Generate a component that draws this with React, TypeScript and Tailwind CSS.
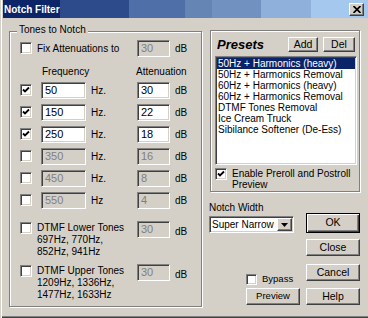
import React from "react";

const FONT = { fontFamily: '"Liberation Sans", Arial, sans-serif' };

const sunken =
  "border border-t-[#808080] border-l-[#808080] border-r-white border-b-white shadow-[inset_1px_1px_0_#404040,inset_-1px_-1px_0_#d4d0c8]";
const raised =
  "border border-t-white border-l-white border-r-[#404040] border-b-[#404040] shadow-[inset_-1px_-1px_0_#808080]";

function Check({ checked = false, size = 12 }: { checked?: boolean; size?: number }) {
  return (
    <div
      className={`${sunken} bg-white shrink-0 flex items-center justify-center`}
      style={{ width: size, height: size }}
    >
      {checked && (
        <svg width="8" height="8" viewBox="0 0 8 8">
          <path d="M1 3.5 L3 5.5 L7 1.5" stroke="#000" strokeWidth="1.8" fill="none" />
        </svg>
      )}
    </div>
  );
}

function Field({ value, w, disabled = false }: { value: string; w: number; disabled?: boolean }) {
  return (
    <div
      className={`${sunken} h-[17px] shrink-0 flex items-center pl-[3px] text-[11px] leading-none ${
        disabled ? "bg-[#d4d0c8] text-[#808080]" : "bg-white text-black"
      }`}
      style={{ width: w }}
    >
      {value}
    </div>
  );
}

function Btn({ label, w, def = false, small = false }: { label: string; w: number; def?: boolean; small?: boolean }) {
  if (def) {
    return (
      <div
        className="border border-black h-[20px] flex items-center justify-center bg-[#d4d0c8] shadow-[inset_1px_1px_0_#fff,inset_-1px_-1px_0_#404040,inset_-2px_-2px_0_#808080] text-[10.5px] text-black"
        style={{ width: w }}
      >
        {label}
      </div>
    );
  }
  return (
    <div
      className={`${raised} h-[17px] flex items-center justify-center bg-[#d4d0c8] text-black ${
        small ? "text-[9.5px]" : "text-[10.5px]"
      }`}
      style={{ width: w }}
    >
      {label}
    </div>
  );
}

const rows = [
  { f: "50", a: "30", on: true, u: "Hz." },
  { f: "150", a: "22", on: true, u: "Hz." },
  { f: "250", a: "18", on: true, u: "Hz." },
  { f: "350", a: "16", on: false, u: "Hz." },
  { f: "450", a: "8", on: false, u: "Hz." },
  { f: "550", a: "4", on: false, u: "Hz" },
];

const presets = [
  "50Hz + Harmonics (heavy)",
  "50Hz + Harmonics Removal",
  "60Hz + Harmonics (heavy)",
  "60Hz + Harmonics Removal",
  "DTMF Tones Removal",
  "Ice Cream Truck",
  "Sibilance Softener (De-Ess)",
];

export default function App() {
  return (
    <div
      className="w-[368px] h-[318px] bg-[#d4d0c8] overflow-hidden flex flex-col pl-[3px] shadow-[inset_1px_0_0_#d4d0c8,inset_2px_0_0_#fff,inset_0_-1px_0_#404040,inset_0_-2px_0_#808080] text-black select-none"
      style={FONT}
    >
      {/* Title bar */}
      <div className="h-[18px] flex items-center justify-between bg-[linear-gradient(90deg,#0c2468_0px_57px,#2d4a8a_57px_126px,#4f6fa8_126px_182px,#6585b4_182px_209px,#7191c1_209px_258px,#8eb0da_258px_308px,#a4c8ee_308px)]">
        <span className="text-white font-bold text-[10px] leading-none pl-[1px] pt-[1px]">Notch Filter</span>
        <div className={`${raised} w-[15px] h-[13px] mr-[4px] bg-[#d4d0c8] flex items-center justify-center`}>
          <svg width="8" height="7" viewBox="0 0 8 7">
            <path d="M0.5 0 L7.5 7 M7.5 0 L0.5 7" stroke="#000" strokeWidth="1.7" />
          </svg>
        </div>
      </div>

      <div className="flex items-start pl-[6px]">
        {/* Left group */}
        <div className="relative mt-[13px] w-[193px] h-[276px] border border-[#808080] shadow-[inset_1px_1px_0_#fff,1px_1px_0_#fff] flex flex-col pl-[10px] text-[10px]">
          <span className="absolute left-[7px] top-[-8px] px-[2px] bg-[#d4d0c8] leading-[11px]">Tones to Notch</span>

          <div className="mt-[5px] h-[22px] flex items-center">
            <Check />
            <span className="w-[105px] pl-[5px] leading-[11px]">Fix Attenuations to</span>
            <Field value="30" w={33} disabled />
            <span className="ml-[5px]">dB</span>
          </div>

          <div className="h-[20px] pt-[7px] flex leading-[11px] pl-[22px]">
            <span className="w-[94px]">Frequency</span>
            <span>Attenuation</span>
          </div>

          {rows.map((r) => (
            <div key={r.f} className="h-[22px] flex items-center">
              <Check checked={r.on} />
              <div className="w-[9px]" />
              <Field value={r.f} w={45} disabled={!r.on} />
              <span className="w-[51px] pl-[5px]">{r.u}</span>
              <Field value={r.a} w={33} disabled={!r.on} />
              <span className="ml-[5px]">dB</span>
            </div>
          ))}

          <div className="mt-[10px] flex items-start">
            <div className="mt-[1px]">
              <Check />
            </div>
            <div className="w-[105px] pl-[5px] leading-[12px] pt-[1px]">
              <div>DTMF Lower Tones</div>
              <div>697Hz, 770Hz,</div>
              <div>852Hz, 941Hz</div>
            </div>
            <Field value="30" w={33} disabled />
            <span className="ml-[5px] mt-[3px]">dB</span>
          </div>

          <div className="mt-[6px] flex items-start">
            <div className="mt-[1px]">
              <Check />
            </div>
            <div className="w-[105px] pl-[5px] leading-[12px] pt-[1px]">
              <div>DTMF Upper Tones</div>
              <div>1209Hz, 1336Hz,</div>
              <div>1477Hz, 1633Hz</div>
            </div>
            <Field value="30" w={33} disabled />
            <span className="ml-[5px] mt-[3px]">dB</span>
          </div>
        </div>

        {/* Right column */}
        <div className="ml-[7px] w-[152px] flex flex-col text-[10px]">
          <div className="ml-[1px] mt-[12px] w-[150px] h-[162px] border border-[#808080] shadow-[inset_1px_1px_0_#fff,1px_1px_0_#fff] flex flex-col pt-[6px]">
            <div className="h-[15px] flex items-center">
              <span className="ml-[6px] w-[71px] font-bold italic text-[13px] leading-none">Presets</span>
              <div className={`${raised} w-[30px] h-[15px] flex items-center justify-center text-[10.5px]`}>Add</div>
              <div className={`${raised} ml-[5px] w-[32px] h-[15px] flex items-center justify-center text-[10.5px]`}>Del</div>
            </div>
            <div className={`${sunken} ml-[4px] mt-[4px] w-[142px] h-[109px] bg-white pt-[1px] px-[1px]`}>
              {presets.map((p, i) => (
                <div
                  key={p}
                  className={`h-[11px] leading-[11px] pl-[1px] whitespace-nowrap ${
                    i === 0 ? "bg-[#0a246a] text-white" : "text-black"
                  }`}
                >
                  {p}
                </div>
              ))}
            </div>
            <div className="ml-[4px] mt-[3px] flex items-start">
              <Check checked />
              <div className="pl-[5px] leading-[11px]">
                <div>Enable Preroll and Postroll</div>
                <div>Preview</div>
              </div>
            </div>
          </div>

          <div className="flex">
            <div className="w-[97px] flex flex-col">
              <span className="mt-[10px] leading-[11px]">Notch Width</span>
              <div className={`${sunken} mt-[3px] w-[85px] h-[17px] bg-white flex items-center justify-between pl-[2px] pr-[1px]`}>
                <span className="leading-none">Super Narrow</span>
                <div className={`${raised} w-[15px] h-[13px] bg-[#d4d0c8] flex items-center justify-center`}>
                  <svg width="7" height="4" viewBox="0 0 7 4">
                    <path d="M0 0 H7 L3.5 4 Z" fill="#000" />
                  </svg>
                </div>
              </div>
              <div className="mt-[40px] ml-[37px] h-[12px] flex items-center">
                <Check size={11} />
                <span className="ml-[5px] text-[9.5px]">Bypass</span>
              </div>
              <div className="mt-[3px] ml-[37px]">
                <Btn label="Preview" w={54} small />
              </div>
            </div>
            <div className="flex flex-col mt-[21px]">
              <Btn label="OK" w={54} def />
              <div className="mt-[6px]">
                <Btn label="Close" w={54} />
              </div>
              <div className="mt-[8px]">
                <Btn label="Cancel" w={54} />
              </div>
              <div className="mt-[7px]">
                <Btn label="Help" w={54} />
              </div>
            </div>
          </div>
        </div>
      </div>
    </div>
  );
}
